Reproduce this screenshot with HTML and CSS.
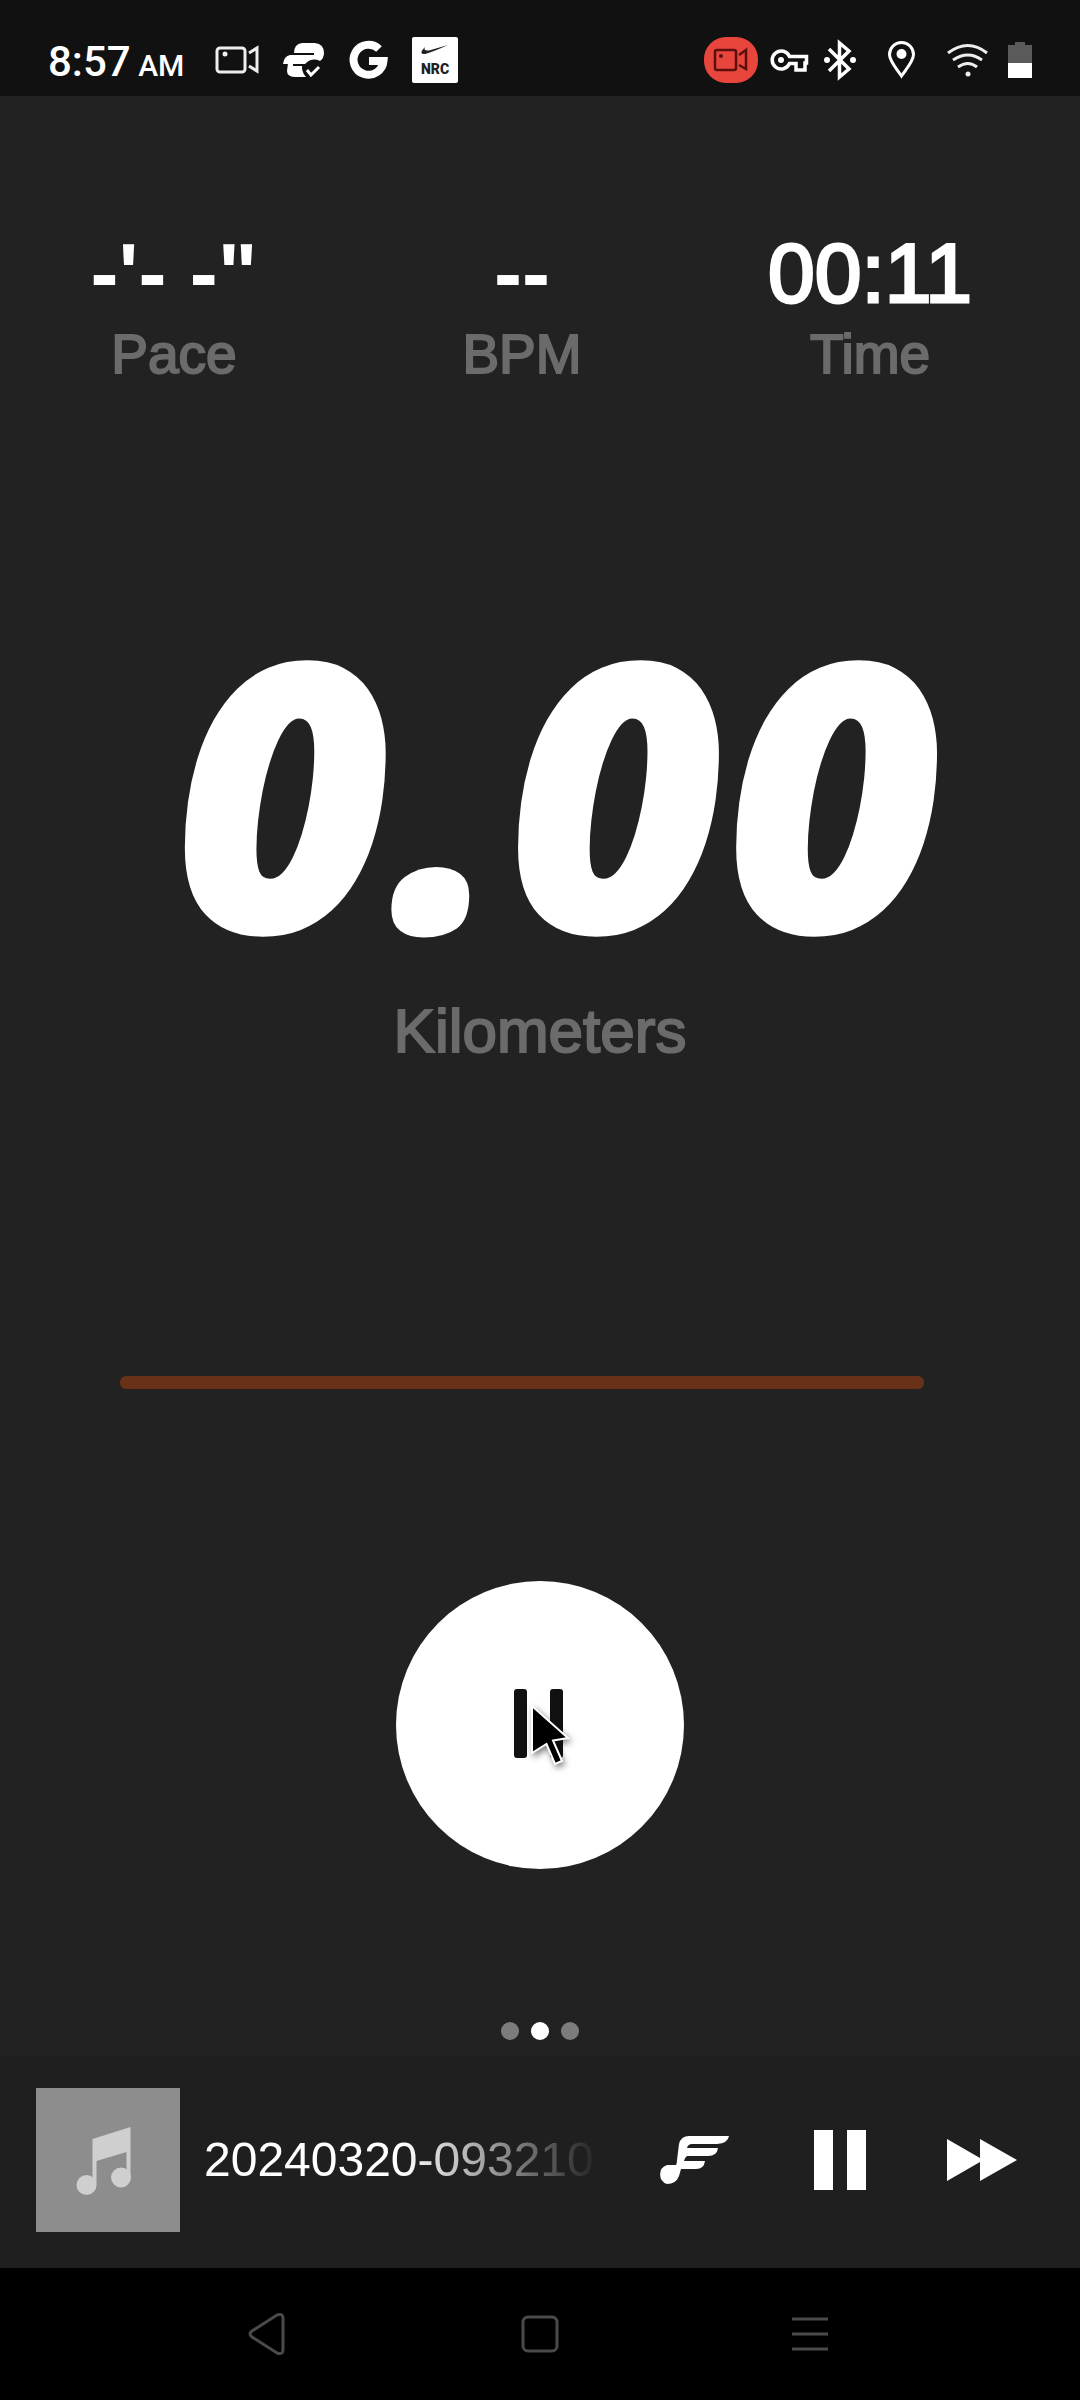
FILE: index.html
```html
<!DOCTYPE html>
<html lang="en">
<head>
<meta charset="utf-8">
<meta name="viewport" content="width=device-width, initial-scale=1">
<title>Run</title>
<link rel="stylesheet" href="styles.css">
</head>
<body>
<div class="screen">
  <header class="status">
    <div class="status-left">
      <time class="clock">8:57 <span class="meridiem">AM</span></time>
      <svg width="48" height="48" fill="none" stroke="#eee" stroke-width="3"><rect x="4" y="12" width="28" height="24" rx="3"/><path d="M36 17L44 12V35L36 30"/><circle cx="12" cy="18" r="2.5" fill="#eee" stroke="none"/></svg>
      <svg width="48" height="48" fill="#fff"><path d="M15 17Q15 8 23 7H36Q45 8 45 17Q45 22 41 25Q33 21 26 28H4Q5 20 11 19H35V17Z"/><path d="M9 27H24Q21 34 27 41H17Q8 41 8 35Z"/><path d="M14 29H27M12 18H35" stroke="#111" stroke-width="2"/><path d="M28 34L32 39L40 31" fill="none" stroke="#fff" stroke-width="3"/></svg>
      <svg width="48" height="48" fill="none" stroke="#fff" stroke-width="8"><path d="M34 13A15 15 0 1 0 38.500 25H24"/></svg>
      <svg class="nrc" width="48" height="48"><rect x="1" y="1" width="46" height="46" rx="2" fill="#fff"/><path d="M14 11Q8 17 12 18Q15 19 37 9L18 14.500Q12 15 14 11Z" fill="#222"/><text x="24" y="38" text-anchor="middle">NRC</text></svg>
    </div>
    <div class="status-right">
      <svg width="54" height="48" fill="none" stroke="#5c100c" stroke-width="2.500"><rect y="1" width="54" height="46" rx="22" fill="#e8453c" stroke="none"/><rect x="11" y="14" width="21" height="20" rx="2"/><path d="M35 19L42 14V33L35 29"/><circle cx="17" cy="20" r="2" fill="#5c100c" stroke="none"/></svg>
      <svg width="40" height="48" fill="none" stroke="#fff" stroke-width="3.500"><path d="M19.500 20.500H36.500V27H35V34H26V27.500H19.500A9 9 0 1 1 19.500 20.500Z"/><circle cx="11" cy="24" r="3" fill="#fff" stroke="none"/></svg>
      <svg width="42" height="48" fill="none" stroke="#fff" stroke-width="3.500"><path d="M7 13L27 33L17.500 41V7L27 15L7 35"/><circle cx="5" cy="24" r="3" fill="#fff" stroke="none"/><circle cx="31" cy="24" r="3" fill="#fff" stroke="none"/></svg>
      <svg width="48" height="48" fill="none" stroke="#fff" stroke-width="3"><path d="M25.500 40C20 32 13.500 25 13.500 18.500A12 12 0 0 1 37.500 18.500C37.500 25 31 32 25.500 40Z"/><circle cx="25.500" cy="18" r="5" fill="#fff" stroke="none"/></svg>
      <svg width="60" height="48" fill="none" stroke="#eee" stroke-width="3"><path d="M12 17Q32 2 51 17M17 24Q32 14 46 24M22 31Q32 24 41 31"/><circle cx="32" cy="38" r="2.500" fill="#eee" stroke="none"/></svg>
      <svg width="24" height="48"><path d="M0 9H7V6H17V9H24V27H0Z" fill="#5a5a5a"/><path d="M0 27H24V42H0Z" fill="#fff"/></svg>
    </div>
  </header>

  <main class="run">
    <section class="stats">
      <div class="stat"><div class="value dashes">-'- -"</div><div class="label">Pace</div></div>
      <div class="stat"><div class="value dashes">--</div><div class="label">BPM</div></div>
      <div class="stat"><div class="value">00:11</div><div class="label">Time</div></div>
    </section>
    <section class="distance">
      <div class="distance-value">0.00</div>
      <div class="distance-unit">Kilometers</div>
    </section>
    <div class="track"></div>
    <button class="pause" type="button" aria-label="Pause run">
      <svg width="72" height="72" fill="#111"><rect x="10" y="0" width="13" height="69" rx="3"/><rect x="46" y="0" width="13" height="69" rx="3"/></svg>
      <svg class="cursor" width="56" height="76"><path d="M4 4L40 36L25 38.500L34 59L27 62L18.500 42L4 51Z" fill="#000" stroke="#fff" stroke-width="2"/></svg>
    </button>
    <div class="pages"><span class="dot"></span><span class="dot current"></span><span class="dot"></span></div>
  </main>

  <section class="player">
    <svg class="art" width="144" height="144" fill="#cfcfcf"><path d="M56.500 51L94.500 39V90H90.500V64L60.500 73V97H56.500Z"/><circle cx="50.500" cy="97" r="10"/><circle cx="85" cy="89.500" r="10"/></svg>
    <div class="song">20240320-093210</div>
    <div class="controls">
      <button type="button" aria-label="Music source"><svg width="82" height="60" fill="#fff"><path d="M11 35H20Q21 33 21 30L23 14Q25 6 33 6H73Q72 13 61 14H36Q32 14 31 18H62Q61 26 52 26H31Q29 27 28 31H49Q48 39 40 39H25L23 46Q20 54 11 54A10 10 0 0 1 11 35Z"/></svg></button>
      <button type="button" aria-label="Pause music"><svg width="52" height="60" fill="#fff"><path d="M0 0H19V60H0ZM33 0H52V60H33Z"/></svg></button>
      <button type="button" aria-label="Next song"><svg width="72" height="60" fill="#fff"><path d="M0 9L33 28V9L70 30L33 51V32L0 51Z"/></svg></button>
    </div>
  </section>

  <nav class="system">
    <button type="button" aria-label="Back"><svg width="48" height="44"><path d="M6 19Q2 22 6 25L31 41Q37 43 37 38V6Q37 1 31 3Z"/></svg></button>
    <button type="button" aria-label="Home"><svg width="40" height="44"><rect x="3" y="5" width="34" height="34" rx="5"/></svg></button>
    <button type="button" aria-label="Recent apps"><svg width="40" height="44"><path d="M2 7H38M2 22H38M2 37H38"/></svg></button>
  </nav>
</div>
</body>
</html>
```
FILE: styles.css
```css
* { box-sizing: border-box; }
body { margin: 0; background: #222; color: #fff; font-family: "Liberation Sans", Arial, sans-serif; }
svg { display: block; flex: none; }
button { display: flex; align-items: center; justify-content: center; padding: 0; border: 0; background: none; color: inherit; }

.screen { display: flex; flex-direction: column; min-height: 100vh; }

.status { display: flex; justify-content: space-between; align-items: center; padding: 24px 48px 0; height: 96px; background: #111; }
.status-left { display: flex; align-items: center; gap: 18px; }
.status-right { display: flex; align-items: center; gap: 12px; }
.clock { width: 147px; padding-top: 8px; font: 500 42px/48px Roboto, sans-serif; white-space: nowrap; }
.meridiem { font-size: 30px; margin-left: -3px; }
.nrc text { font: 900 14px Roboto, sans-serif; fill: #222; }

.run { flex: 1; display: flex; flex-direction: column; align-items: center; padding: 129px 0 16px; }
.stats { align-self: stretch; display: grid; grid-template-columns: repeat(3, 1fr); padding-right: 36px; text-align: center; }
.value { font-size: 84px; line-height: 96px; -webkit-text-stroke: 3px #fff; }
.dashes { font-weight: bold; -webkit-text-stroke: 0; }
.label { font-size: 55px; line-height: 66px; color: #6b6b6b; -webkit-text-stroke: 2px #6b6b6b; }
.distance { margin-top: 208px; text-align: center; }
.distance-value { padding-left: 36px; font: italic 800 376px/384px "Open Sans", sans-serif; }
.distance-unit { margin-top: 16px; font-size: 62px; line-height: 72px; color: #6b6b6b; -webkit-text-stroke: 2px #6b6b6b; }
.track { align-self: stretch; height: 13px; margin: 309px 156px 0 120px; border-radius: 6px; background: #683118; }
.pause { position: relative; width: 288px; height: 288px; margin-top: 192px; border-radius: 50%; background: #fff; }
.cursor { position: absolute; left: 132px; top: 121px; filter: drop-shadow(2px 3px 3px rgba(0, 0, 0, .5)); }
.pages { display: flex; gap: 12px; margin-top: 153px; }
.dot { width: 18px; height: 18px; border-radius: 50%; background: #7c7c7c; }
.current { background: #fff; }

.player { display: flex; align-items: center; gap: 24px; padding: 32px 26px 36px 36px; background: #1f1f1f; }
.art { background: #8d8d8d; }
.song { flex: 1; min-width: 0; overflow: hidden; font-size: 48px; line-height: 56px; white-space: nowrap; mask-image: linear-gradient(to right, #000 50%, transparent 100%); }
.controls { display: flex; }
.controls button { width: 143px; height: 96px; }

.system { display: flex; justify-content: center; height: 132px; background: #000; }
.system button { width: 25%; }
.system svg { fill: none; stroke: #4a4a4a; stroke-width: 3; }
```
